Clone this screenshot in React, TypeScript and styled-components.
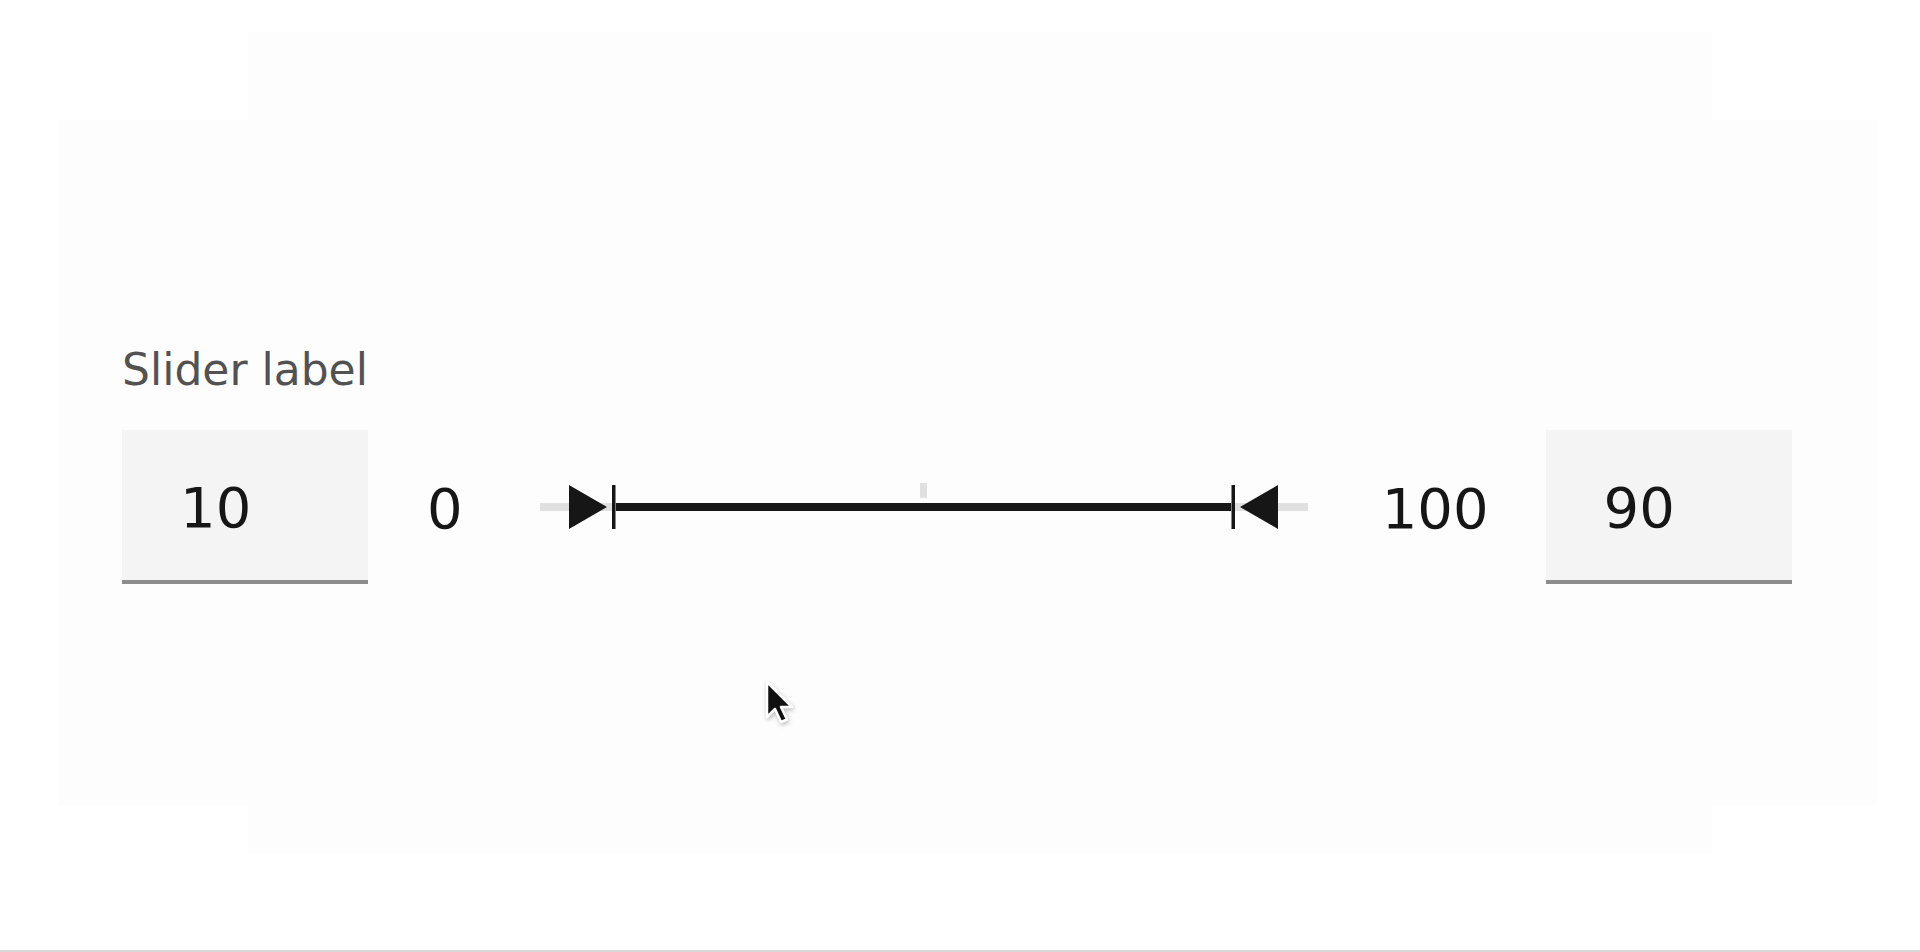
import styled, { createGlobalStyle } from 'styled-components';

const GlobalStyle = createGlobalStyle`
  html, body {
    margin: 0;
    padding: 0;
    background: #ffffff;
  }
  body {
    font-family: 'DejaVu Sans', 'Liberation Sans', sans-serif;
  }
`;

const MIN = 0;
const MAX = 100;
const LOW = 10;
const HIGH = 90;

const toPercent = (value: number) => ((value - MIN) / (MAX - MIN)) * 100;

const Page = styled.div`
  height: 950px;
  border-bottom: 2px solid #d6d6d6;
  overflow: hidden;
  position: relative;
`;

const Frame = styled.div`
  margin: 32px 0 0 248px;
  width: 1464px;
  height: 821px;
  background: #fdfdfd;
  padding-top: 88px;
  box-sizing: border-box;
`;

const Panel = styled.div`
  margin-left: -190px;
  width: 1819px;
  height: 685px;
  background: #fdfdfd;
  padding: 223px 0 0 64px;
  box-sizing: border-box;
`;

const Label = styled.label`
  display: block;
  font-size: 44px;
  line-height: 54px;
  color: #525252;
  margin-bottom: 33px;
`;

const Row = styled.div`
  display: flex;
  align-items: center;
`;

const NumberBox = styled.div`
  width: 246px;
  height: 154px;
  box-sizing: border-box;
  background: #f4f4f4;
  border-bottom: 4px solid #8d8d8d;
  display: flex;
  align-items: center;
  padding: 6px 0 0 58px;
  font-size: 56px;
  line-height: 1;
  color: #161616;
`;

const RangeValue = styled.span<{ $before: number; $after: number }>`
  font-size: 56px;
  line-height: 1;
  color: #161616;
  margin-left: ${(p) => p.$before}px;
  margin-right: ${(p) => p.$after}px;
  padding-top: 4px;
`;

const TrackArea = styled.div`
  position: relative;
  width: 768px;
  height: 44px;
`;

const Rail = styled.div`
  margin-top: 18px;
  height: 8px;
  background: #e0e0e0;
`;

const Filled = styled.div`
  position: absolute;
  top: 18px;
  height: 8px;
  background: #161616;
`;

const Tick = styled.div`
  position: absolute;
  left: calc(50% - 4px);
  top: -2px;
  width: 7px;
  height: 15px;
  background: #e0e0e0;
`;

const ThumbSvg = styled.svg`
  position: absolute;
  top: 0;
  width: 48px;
  height: 44px;
  display: block;
`;

const Cursor = styled.svg`
  position: absolute;
  left: 764px;
  top: 679px;
  width: 32px;
  height: 48px;
  filter: drop-shadow(1px 2px 2px rgba(0, 0, 0, 0.25));
`;

const LowThumb = ({ value }: { value: number }) => (
  <ThumbSvg viewBox="0 0 48 44" style={{ left: `calc(${toPercent(value)}% - 47px)` }}>
    <polygon points="0,0 38,22 0,44" fill="#161616" />
    <rect x="43" y="0" width="3.5" height="44" fill="#161616" />
  </ThumbSvg>
);

const HighThumb = ({ value }: { value: number }) => (
  <ThumbSvg viewBox="0 0 48 44" style={{ left: `calc(${toPercent(value)}% - 1px)` }}>
    <rect x="1.5" y="0" width="3.5" height="44" fill="#161616" />
    <polygon points="48,0 10,22 48,44" fill="#161616" />
  </ThumbSvg>
);

export default function App() {
  const lo = toPercent(LOW);
  const hi = toPercent(HIGH);

  return (
    <Page>
      <GlobalStyle />
      <Frame>
        <Panel>
          <Label>Slider label</Label>
          <Row>
            <NumberBox>{LOW}</NumberBox>
            <RangeValue $before={59} $after={77}>
              {MIN}
            </RangeValue>
            <TrackArea>
              <Tick />
              <Rail />
              <Filled style={{ left: `${lo}%`, width: `${hi - lo}%` }} />
              <LowThumb value={LOW} />
              <HighThumb value={HIGH} />
            </TrackArea>
            <RangeValue $before={74} $after={57}>
              {MAX}
            </RangeValue>
            <NumberBox>{HIGH}</NumberBox>
          </Row>
        </Panel>
      </Frame>
      <Cursor viewBox="0 0 32 48">
        <path
          d="M3 3 L3 38 L11 30 L17 43 L23 40.5 L17 28 L28 28 Z"
          fill="#111"
          stroke="#fff"
          strokeWidth="2.5"
          strokeLinejoin="round"
        />
      </Cursor>
    </Page>
  );
}
